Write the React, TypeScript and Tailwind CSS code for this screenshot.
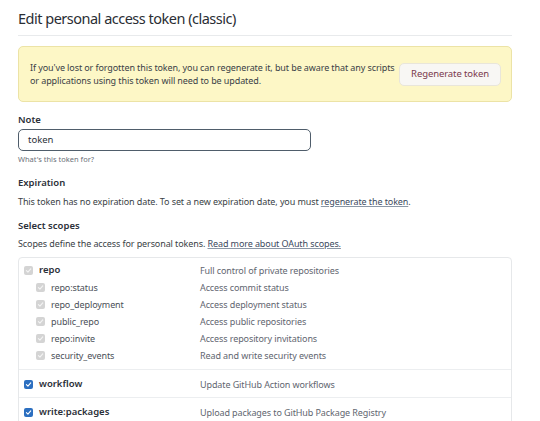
import React from "react";

// ── Scope rows shown in the table
interface Scope {
  name: string;
  desc: string;
  checked: boolean;
  disabled?: boolean;
  children?: { name: string; desc: string }[];
}

const scopes: Scope[] = [
  {
    name: "repo",
    desc: "Full control of private repositories",
    checked: true,
    disabled: true,
    children: [
      { name: "repo:status", desc: "Access commit status" },
      { name: "repo_deployment", desc: "Access deployment status" },
      { name: "public_repo", desc: "Access public repositories" },
      { name: "repo:invite", desc: "Access repository invitations" },
      { name: "security_events", desc: "Read and write security events" },
    ],
  },
  { name: "workflow", desc: "Update GitHub Action workflows", checked: true },
  { name: "write:packages", desc: "Upload packages to GitHub Package Registry", checked: true },
];

function Check({ disabled }: { disabled?: boolean }) {
  return (
    <span
      className={`flex-shrink-0 w-[9px] h-[9px] rounded-[2px] flex items-center justify-center ${
        disabled ? "bg-[#d4d4d4]" : "bg-[#2c6fc0]"
      }`}
    >
      <svg width="7" height="7" viewBox="0 0 10 10" fill="none">
        <path
          d="M2 5.2 4.2 7.4 8.2 2.8"
          stroke={disabled ? "#f4f4f4" : "#ffffff"}
          strokeWidth="1.6"
          strokeLinecap="round"
          strokeLinejoin="round"
        />
      </svg>
    </span>
  );
}

export default function App() {
  return (
    <div
      className="w-[540px] h-[421px] overflow-hidden bg-white text-[#2b3038] px-[18px] pt-[6px]"
      style={{ fontFamily: '"Noto Sans", "Open Sans", sans-serif' }}
    >
      {/* ── Header */}
      <div className="border-b border-[#e8eaec] pb-[5px] mr-[10px]">
        <h2 className="text-[14.5px] tracking-[-0.5px] leading-[24px] text-[#2a2e34]">
          Edit personal access token (classic)
        </h2>
      </div>

      {/* ── Warning flash */}
      <div className="mt-[10px] mr-[10px] h-[56px] flex items-center justify-between pl-[11px] pr-[10px] bg-[#fdf7c6] border border-[#ece3a6] rounded-[5px]">
        <p className="text-[9px] tracking-[-0.1px] leading-[13px] text-[#3a3f46] w-[375px]">
          If you've lost or forgotten this token, you can regenerate it, but be aware that any scripts
          or applications using this token will need to be updated.
        </p>
        <button className="flex-shrink-0 whitespace-nowrap h-[23px] px-[11px] bg-[#f8f7f4] border border-[#e9e6da] rounded-[5px] text-[9.5px] tracking-[-0.1px] text-[#7a3a4c]">
          Regenerate token
        </button>
      </div>

      {/* ── Note */}
      <div className="mt-[11px]">
        <div className="text-[9.5px] leading-[14px] font-semibold">Note</div>
        <div className="mt-[2px] w-[293px] h-[22px] border-[1.5px] border-[#4f5d6b] rounded-[5px] flex items-center px-[9px] text-[9.5px]">
          token
        </div>
        <div className="mt-[2px] text-[7.5px] leading-[12px] text-[#6a7079]">What's this token for?</div>
      </div>

      {/* ── Expiration */}
      <div className="mt-[11px]">
        <div className="text-[9.5px] leading-[14px] font-semibold">Expiration</div>
        <p className="mt-[5px] text-[9px] tracking-[-0.1px] leading-[13px] text-[#3a3f46]">
          This token has no expiration date. To set a new expiration date, you must{" "}
          <a className="underline text-[#3c4a5e] decoration-[#8b97a6]">regenerate the token</a>.
        </p>
      </div>

      {/* ── Scopes */}
      <div className="mt-[11px]">
        <div className="text-[9.5px] leading-[14px] font-semibold">Select scopes</div>
        <p className="mt-[4px] text-[9px] tracking-[-0.1px] leading-[13px] text-[#3a3f46]">
          Scopes define the access for personal tokens.{" "}
          <a className="underline text-[#3c4a5e] decoration-[#8b97a6]">Read more about OAuth scopes.</a>
        </p>
      </div>

      <div className="mt-[7px] mr-[10px] border border-[#e6e8ea] rounded-[4px]">
        {scopes.map((s, i) => (
          <div
            key={s.name}
            className={`${i > 0 ? "pt-[6px] pb-[4px] border-t border-[#eceef0]" : "pt-[4px] pb-[5px]"}`}
          >
            <div className="flex items-center h-[17px]">
              <div className="w-[181px] flex items-center gap-[6px] pl-[5px] text-[9.5px] font-semibold text-[#2b3038]">
                <Check disabled={s.disabled} />
                <span>{s.name}</span>
              </div>
              <div className="text-[9px] tracking-[-0.1px] text-[#5f6670]">{s.desc}</div>
            </div>
            {s.children?.map((c) => (
              <div key={c.name} className="flex items-center h-[17px]">
                <div className="w-[181px] flex items-center gap-[6px] pl-[17px] text-[9px] tracking-[-0.1px] text-[#4a5058]">
                  <Check disabled />
                  <span>{c.name}</span>
                </div>
                <div className="text-[9px] tracking-[-0.1px] text-[#5f6670]">{c.desc}</div>
              </div>
            ))}
          </div>
        ))}
      </div>
    </div>
  );
}
